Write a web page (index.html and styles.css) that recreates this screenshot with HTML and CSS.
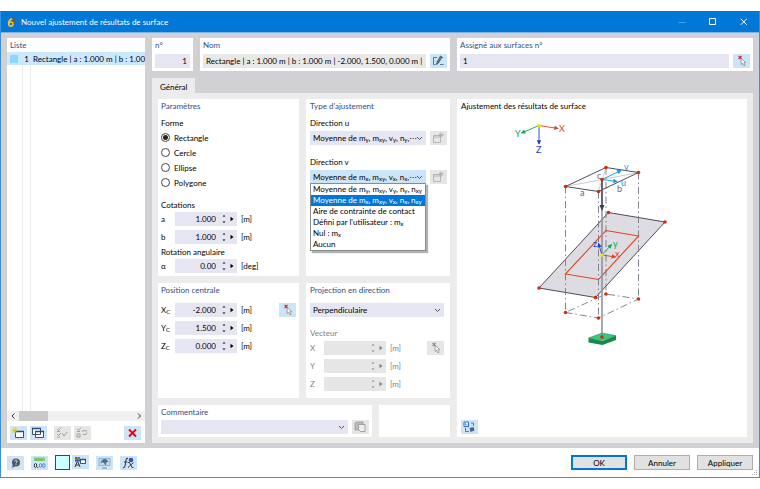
FILE: index.html
```html
<!DOCTYPE html>
<html lang="fr">
<head>
    <meta charset="UTF-8">
    <meta name="viewport" content="width=device-width, initial-scale=1.0">
    <title>Nouvel ajustement de résultats de surface</title>
    <link rel="stylesheet" href="styles.css">
</head>
<body>
    <svg class="defs" width="0" height="0" aria-hidden="true">
        <symbol id="i-steps" viewBox="0 0 8 14">
            <path d="M2.500 4.500l1.500-1.500 1.500 1.500zM2.500 9.500L4 11l1.500-1.500z" fill="currentColor"/>
        </symbol>
        <symbol id="i-play" viewBox="0 0 8 14">
            <path d="M2.500 4.700L5.500 7l-3 2.300z" fill="currentColor"/>
        </symbol>
        <symbol id="i-pick" viewBox="0 0 17 14">
            <path class="cross" d="M5.600 2l3 3M8.600 2l-3 3" stroke-width="1.100"/>
            <path d="M8 4.500l.2 6 1.400-1.300 1.300 2.600 1.200-.6-1.200-2.500 1.800-.3z" fill="#fff" stroke="#7b7f84" stroke-width=".7"/>
        </symbol>
        <symbol id="i-newtype" viewBox="0 0 17 14">
            <path d="M3.500 4.500h7v7h-7zM3.500 6h7M11 1.500v5M8.500 4h5.500M9.500 2.500l3.200 3M12.700 2.500l-3.200 3" fill="none" stroke="#a9a9a9" stroke-width=".8"/>
        </symbol>
    </svg>

    <div class="window">
        <header class="titlebar">
            <svg class="app-icon" viewBox="0 0 10 12">
                <path d="M4 3.500C5 1 9 1 9 4S8 8 7 8" fill="#596169" stroke="#596169"/>
                <path d="M4.800 2.500C2.500 3.800 1.600 6 1.600 8" fill="none" stroke="#f5c62c" stroke-width="1.600"/>
                <circle cx="3.800" cy="8" r="2.100" fill="none" stroke="#f5c62c" stroke-width="1.500"/>
            </svg>
            <h1>Nouvel ajustement de résultats de surface</h1>
            <button class="win-btn dim" aria-label="Réduire"><svg viewBox="0 0 8 8"><path d="M.5 4.500h7"/></svg></button>
            <button class="win-btn" aria-label="Agrandir"><svg viewBox="0 0 8 8"><path d="M.5.5h6v6h-6z"/></svg></button>
            <button class="win-btn" aria-label="Fermer"><svg viewBox="0 0 8 8"><path d="M.8.8l6 6M6.800.8l-6 6"/></svg></button>
        </header>

        <main class="main">
            <section class="panel list">
                <h2>Liste</h2>
                <div class="list-body">
                    <div class="list-row">
                        <span class="swatch"></span>
                        <span class="num">1</span>
                        <span class="name">Rectangle | a : 1.000 m | b : 1.000 m</span>
                    </div>
                </div>
                <div class="scrollbar">
                    <svg viewBox="0 0 10 10"><path d="M6.500 2.500L4 5l2.500 2.500"/></svg>
                    <span class="thumb"></span>
                    <svg viewBox="0 0 10 10"><path d="M4 2.500L6.500 5 4 7.500"/></svg>
                </div>
                <div class="list-tools">
                    <button class="tool" aria-label="Nouveau"><svg viewBox="0 0 17 14"><path d="M5.500 5.500h8v6h-8z" fill="#fff" stroke="#3d5064"/><path d="M5 5.500h9" stroke="#274b80" stroke-width="1.500"/><path d="M5 1v7M2 4.500h6M3 2.500l4 4M7 2.500l-4 4" stroke="#d8c21c" stroke-width=".9"/></svg></button>
                    <button class="tool" aria-label="Copier"><svg viewBox="0 0 17 14"><path d="M2.500 2.500h8v6h-8zM5.500 5.500h8v6h-8z" fill="#fff" stroke="#3d5064"/><path d="M2 2.500h9M5 5.500h9" stroke="#274b80" stroke-width="1.500"/></svg></button>
                    <button class="tool off gap" aria-label="Tout sélectionner" disabled><svg viewBox="0 0 17 14"><path d="M3 3l1.500 1.500L7 1.500M3 8l1.500 1.500L7 7M8.500 7.500l1.500 2.500 3-4M3 5.500h3M3 11h3" fill="none" stroke="#999" stroke-width=".9"/></svg></button>
                    <button class="tool off" aria-label="Inverser la sélection" disabled><svg viewBox="0 0 17 14"><path d="M3 3l1.500 1.500L7 1.500M3 5.500h3M3 8h3v3H3zM8 6l1-1.500 4 .5M9 8.500h3l1-2" fill="none" stroke="#999" stroke-width=".9"/></svg></button>
                    <button class="tool last" aria-label="Supprimer"><svg viewBox="0 0 17 14"><path d="M5 3.500l7 7M12 3.500l-7 7" stroke="#f00010" stroke-width="1.900"/></svg></button>
                </div>
            </section>

            <div class="right">
                <div class="top">
                    <section class="panel">
                        <h2><label for="no">n°</label></h2>
                        <input class="field end" id="no" type="text" value="1">
                    </section>
                    <section class="panel">
                        <h2><label for="nom">Nom</label></h2>
                        <div class="line">
                            <input class="field grey" id="nom" type="text" readonly value="Rectangle | a : 1.000 m | b : 1.000 m | -2.000, 1.500, 0.000 m | Moyenne">
                            <button class="tool" aria-label="Modifier le nom"><svg viewBox="0 0 17 14"><path d="M7 3.500H3.500v7h2M11 3.500h2M10 10.500h3.500" fill="none" stroke="#536b80" stroke-width=".9"/><path d="M6.500 10.500L7 8l3.500-6 1.500 1-3.500 6z" fill="#6d7e8c" stroke="#35434f" stroke-width=".7"/></svg></button>
                        </div>
                    </section>
                    <section class="panel">
                        <h2><label for="surf">Assigné aux surfaces n°</label></h2>
                        <div class="line">
                            <input class="field" id="surf" type="text" value="1">
                            <button class="tool" aria-label="Sélectionner les surfaces"><svg><use href="#i-pick"/></svg></button>
                        </div>
                    </section>
                </div>

                <div class="tabs" role="tablist">
                    <button class="tab" role="tab" aria-selected="true">Général</button>
                </div>

                <div class="tab-page">
                    <section class="panel params">
                        <h2>Paramètres</h2>
                        <fieldset class="shapes">
                            <legend>Forme</legend>
                            <label><input type="radio" name="forme" checked>Rectangle</label>
                            <label><input type="radio" name="forme">Cercle</label>
                            <label><input type="radio" name="forme">Ellipse</label>
                            <label><input type="radio" name="forme">Polygone</label>
                        </fieldset>
                        <h3 class="dims">Cotations</h3>
                        <div class="values">
                            <div class="value">
                                <label for="a">a</label>
                                <div class="spin"><input id="a" type="text" value="1.000"><button aria-label="Pas"><svg><use href="#i-steps"/></svg></button><button aria-label="Plus"><svg><use href="#i-play"/></svg></button></div>
                                <span>[m]</span>
                            </div>
                            <div class="value">
                                <label for="b">b</label>
                                <div class="spin"><input id="b" type="text" value="1.000"><button aria-label="Pas"><svg><use href="#i-steps"/></svg></button><button aria-label="Plus"><svg><use href="#i-play"/></svg></button></div>
                                <span>[m]</span>
                            </div>
                        </div>
                        <h3>Rotation angulaire</h3>
                        <div class="values">
                            <div class="value">
                                <label for="alpha">α</label>
                                <div class="spin"><input id="alpha" type="text" value="0.00"><button aria-label="Pas"><svg><use href="#i-steps"/></svg></button><button aria-label="Plus"><svg><use href="#i-play"/></svg></button></div>
                                <span>[deg]</span>
                            </div>
                        </div>
                    </section>

                    <section class="panel type">
                        <h2>Type d'ajustement</h2>
                        <label class="caption" for="dir-u">Direction u</label>
                        <div class="line combo">
                            <select class="field" id="dir-u">
                                <option aria-label="Moyenne, direction y"></option>
                            </select>
                            <span class="combo-text">Moyenne de m<sub>y</sub>, m<sub>xy</sub>, v<sub>y</sub>, n<sub>y</sub>,⋯</span>
                            <button class="tool off" aria-label="Nouveau type" disabled><svg><use href="#i-newtype"/></svg></button>
                        </div>
                        <label class="caption second" for="dir-v">Direction v</label>
                        <div class="line combo">
                            <select class="field active" id="dir-v">
                                <option aria-label="Moyenne, direction x"></option>
                            </select>
                            <span class="combo-text">Moyenne de m<sub>x</sub>, m<sub>xy</sub>, v<sub>x</sub>, n<sub>x</sub>,⋯</span>
                            <button class="tool off" aria-label="Nouveau type" disabled><svg><use href="#i-newtype"/></svg></button>
                            <ul class="popup" role="listbox">
                                <li role="option">Moyenne de m<sub>y</sub>, m<sub>xy</sub>, v<sub>y</sub>, n<sub>y</sub>, n<sub>xy</sub></li>
                                <li role="option" aria-selected="true">Moyenne de m<sub>x</sub>, m<sub>xy</sub>, v<sub>x</sub>, n<sub>x</sub>, n<sub>xy</sub></li>
                                <li role="option">Aire de contrainte de contact</li>
                                <li role="option">Défini par l'utilisateur : m<sub>x</sub></li>
                                <li role="option">Nul : m<sub>x</sub></li>
                                <li role="option">Aucun</li>
                            </ul>
                        </div>
                    </section>

                    <section class="panel position">
                        <h2>Position centrale</h2>
                        <div class="pick-row">
                            <div class="values">
                                <div class="value">
                                    <label for="xc">X<sub>C</sub></label>
                                    <div class="spin"><input id="xc" type="text" value="-2.000"><button aria-label="Pas"><svg><use href="#i-steps"/></svg></button><button aria-label="Plus"><svg><use href="#i-play"/></svg></button></div>
                                    <span>[m]</span>
                                </div>
                                <div class="value">
                                    <label for="yc">Y<sub>C</sub></label>
                                    <div class="spin"><input id="yc" type="text" value="1.500"><button aria-label="Pas"><svg><use href="#i-steps"/></svg></button><button aria-label="Plus"><svg><use href="#i-play"/></svg></button></div>
                                    <span>[m]</span>
                                </div>
                                <div class="value">
                                    <label for="zc">Z<sub>C</sub></label>
                                    <div class="spin"><input id="zc" type="text" value="0.000"><button aria-label="Pas"><svg><use href="#i-steps"/></svg></button><button aria-label="Plus"><svg><use href="#i-play"/></svg></button></div>
                                    <span>[m]</span>
                                </div>
                            </div>
                            <button class="tool" aria-label="Sélectionner le centre"><svg><use href="#i-pick"/></svg></button>
                        </div>
                    </section>

                    <section class="panel projection">
                        <h2><label for="proj">Projection en direction</label></h2>
                        <select class="field" id="proj">
                            <option>Perpendiculaire</option>
                        </select>
                        <h3>Vecteur</h3>
                        <div class="pick-row">
                            <div class="values">
                                <div class="value">
                                    <label for="vx">X</label>
                                    <div class="spin"><input id="vx" type="text" disabled><button aria-label="Pas" disabled><svg><use href="#i-steps"/></svg></button><button aria-label="Plus" disabled><svg><use href="#i-play"/></svg></button></div>
                                    <span>[m]</span>
                                </div>
                                <div class="value">
                                    <label for="vy">Y</label>
                                    <div class="spin"><input id="vy" type="text" disabled><button aria-label="Pas" disabled><svg><use href="#i-steps"/></svg></button><button aria-label="Plus" disabled><svg><use href="#i-play"/></svg></button></div>
                                    <span>[m]</span>
                                </div>
                                <div class="value">
                                    <label for="vz">Z</label>
                                    <div class="spin"><input id="vz" type="text" disabled><button aria-label="Pas" disabled><svg><use href="#i-steps"/></svg></button><button aria-label="Plus" disabled><svg><use href="#i-play"/></svg></button></div>
                                    <span>[m]</span>
                                </div>
                            </div>
                            <button class="tool off" aria-label="Sélectionner le vecteur" disabled><svg><use href="#i-pick"/></svg></button>
                        </div>
                    </section>

                    <div class="bottom">
                        <section class="panel comment">
                            <h2><label for="comment">Commentaire</label></h2>
                            <div class="line">
                                <select class="field" id="comment"><option></option></select>
                                <button class="tool off" aria-label="Bibliothèque" disabled><svg viewBox="0 0 17 14"><path d="M3 3l2-1h6v7l-2 1H3z" fill="#bdbdbd" stroke="#999" stroke-width=".8"/><path d="M6.500 4.500h6.500v7H8.500l-2-2z" fill="#eee" stroke="#999" stroke-width=".9"/></svg></button>
                            </div>
                        </section>
                        <section class="panel blank"></section>
                    </div>

                    <section class="panel preview">
                        <h3>Ajustement des résultats de surface</h3>
                        <svg class="drawing" viewBox="457 112 290 308" role="img" aria-label="Rectangle projeté sur une surface">
                            <defs>
                                <marker id="m-red" viewBox="0 0 6 6" refX="5" refY="3" markerWidth="6" markerHeight="5" orient="auto"><path d="M0 0l6 3-6 3z" fill="#d9431e"/></marker>
                                <marker id="m-green" viewBox="0 0 6 6" refX="5" refY="3" markerWidth="6" markerHeight="5" orient="auto"><path d="M0 0l6 3-6 3z" fill="#12a150"/></marker>
                                <marker id="m-blue" viewBox="0 0 6 6" refX="5" refY="3" markerWidth="6" markerHeight="5" orient="auto"><path d="M0 0l6 3-6 3z" fill="#1c3fc4"/></marker>
                                <marker id="m-cyan" viewBox="0 0 6 6" refX="5" refY="3" markerWidth="6" markerHeight="5" orient="auto"><path d="M0 0l6 3-6 3z" fill="#109ae0"/></marker>
                            </defs>

                            <!-- global axes -->
                            <g fill="none" stroke-width=".9">
                                <path d="M539 125.500L558 128.500" stroke="#d9431e" marker-end="url(#m-red)"/>
                                <path d="M539 125.500L521.500 133" stroke="#12a150" marker-end="url(#m-green)"/>
                                <path d="M539 125.500V144" stroke="#1c3fc4" marker-end="url(#m-blue)"/>
                            </g>
                            <circle cx="539" cy="125.500" r="1.800" fill="#ffdf00"/>
                            <text class="axis" x="559" y="132" fill="#d9431e">X</text>
                            <text class="axis" x="515" y="137" fill="#12a150">Y</text>
                            <text class="axis" x="536" y="153" fill="#1c3fc4">Z</text>

                            <!-- inclined surface -->
                            <path d="M608.500 212.500L665 222 595.500 297.500 539 288z" fill="#dcdce2" stroke="#4e4e5c"/>

                            <!-- projection lines -->
                            <g fill="none" stroke="#777785" stroke-width=".9" stroke-dasharray="7 3 1.500 3">
                                <path d="M565.500 186.500V312.500M598.500 191.500V318M606 167.500V294M638.500 172.500V299"/>
                                <path d="M565.500 312.500L598.500 318 638.500 299 606 294z"/>
                            </g>
                            <path d="M606 230.500L638.500 236 598.500 279.500 565.500 274z" fill="none" stroke="#db421c" stroke-width="1.100"/>

                            <!-- source rectangle -->
                            <path d="M565.500 186.500L638.500 172.500M598.500 191L606 167.500" stroke="#aaaab2" stroke-width=".6"/>
                            <path d="M565.500 186.500L606 167.500 638.500 172.500 598.500 191.500z" fill="none" stroke="#4e4e5c"/>
                            <path d="M602 336.500V179.500" stroke="#8c8c98" stroke-width="1.500"/>
                            <path d="M602 179.500V208" stroke="#4e4e5c" stroke-width="1.500"/>
                            <path d="M599.500 205h5l-2.500 6z" fill="#3f3f4d"/>
                            <g fill="none" stroke="#109ae0" stroke-width=".9">
                                <path d="M602 179.500L621 170.500" marker-end="url(#m-cyan)"/>
                                <path d="M602 179.500L617 181.500" marker-end="url(#m-cyan)"/>
                            </g>
                            <text class="axis" x="624" y="170" fill="#109ae0">v</text>
                            <text class="axis" x="621" y="186" fill="#109ae0">u</text>
                            <text class="axis" x="597" y="179" fill="#666674">c</text>
                            <text class="axis" x="580" y="196" fill="#666674">a</text>
                            <text class="axis" x="617" y="192" fill="#666674">b</text>

                            <!-- support -->
                            <path d="M588.500 338v4.500l14 2.500 13.500-5v-4.500l-13.500 5.500z" fill="#168a48"/>
                            <path d="M588.500 338l13.500-5 13.500 2.500-13.500 5z" fill="#3fc67c" stroke="#168a48" stroke-width=".5"/>

                            <!-- local axes -->
                            <g fill="none" stroke-width=".9">
                                <path d="M602 255L615.500 257" stroke="#d9431e" marker-end="url(#m-red)"/>
                                <path d="M602 255L611.500 244.500" stroke="#12a150" marker-end="url(#m-green)"/>
                                <path d="M602 255L598.500 243.500" stroke="#1c3fc4" marker-end="url(#m-blue)"/>
                            </g>
                            <circle cx="602" cy="255" r="1.800" fill="#ffdf00"/>
                            <text class="axis" x="615" y="257" fill="#d9431e">x</text>
                            <text class="axis" x="613" y="247" fill="#12a150">y</text>
                            <text class="axis" x="593" y="247" fill="#1c3fc4">z</text>

                            <g fill="#d52b08">
                                <circle cx="565.500" cy="186.500" r="1.800"/><circle cx="598.500" cy="191.500" r="1.800"/>
                                <circle cx="606" cy="167.500" r="1.800"/><circle cx="638.500" cy="172.500" r="1.800"/>
                                <circle cx="602" cy="179.500" r="1.800"/><circle cx="608.500" cy="212.500" r="1.800"/>
                                <circle cx="665" cy="222" r="1.800"/><circle cx="595.500" cy="297.500" r="1.800"/>
                                <circle cx="539" cy="288" r="1.800"/><circle cx="565.500" cy="312.500" r="1.800"/>
                                <circle cx="598.500" cy="318" r="1.800"/><circle cx="638.500" cy="299" r="1.800"/>
                                <circle cx="606" cy="294" r="1.800"/><circle cx="602" cy="337" r="1.800"/>
                            </g>
                        </svg>
                        <button class="tool" aria-label="Changer la vue"><svg viewBox="0 0 17 14"><path d="M3 2h4.500v4.500H3z" fill="#fff" stroke="#2d68d8"/><path d="M4.500 3v2h2" fill="none" stroke="#2d68d8" stroke-width=".7"/><path d="M8.500 8l4-1 1 3.500-4 1.500z" fill="#47658f"/><path d="M4.500 8v3.500H8M10 3h2.500v3" fill="none" stroke="#555" stroke-width=".8"/></svg></button>
                    </section>
                </div>
            </div>
        </main>

        <footer class="footer">
            <button class="tool" aria-label="Aide"><svg viewBox="0 0 17 14"><circle cx="9" cy="6.500" r="4" fill="#4c5660"/><path d="M4.500 12l2-4 2 2z" fill="#4c5660"/><path d="M7.700 5.500c0-2 2.800-1.500 2.500 0-.2 1-1.200.8-1.200 2M9 8.300v.9" fill="none" stroke="#fff" stroke-width=".9"/></svg></button>
            <button class="tool" aria-label="Unités"><svg viewBox="0 0 17 14"><path d="M3 1.500h11v3.500H3z" fill="#82cc70"/><path d="M5 3v2M7 3v2M9 3v2M11 3v2" stroke="#4f9a43" stroke-width=".5"/><ellipse cx="4.500" cy="9.500" rx="1.200" ry="2" fill="none" stroke="#334"/><path d="M6.800 11v1" stroke="#334"/><ellipse cx="9.500" cy="9.500" rx="1.200" ry="2" fill="none" stroke="#4e86ec"/><ellipse cx="12.800" cy="9.500" rx="1.200" ry="2" fill="none" stroke="#4e86ec"/></svg></button>
            <div class="pair">
                <button class="color" aria-label="Couleur"></button>
                <button class="tool" aria-label="Affichage"><svg viewBox="0 0 17 14"><path d="M3 2h2.500v2.500H3z" fill="#e03030"/><path d="M5.500 2H8v2.500H5.500z" fill="#33a23b"/><path d="M3 4.500h5v2H3z" fill="#2457c9"/><path d="M3 12l2-5h1l2 5M4 10h3" fill="none" stroke="#333"/><path d="M8.500 4.500h5v4h-5z" fill="#fff" stroke="#2c4f8f"/><path d="M8 4.500h6" stroke="#2c4f8f" stroke-width="1.500"/></svg></button>
            </div>
            <button class="tool" aria-label="Vue"><svg viewBox="0 0 17 14"><path d="M3 2.500h11v7H3z" fill="#c3daea" stroke="#8ca6b8" stroke-width=".8"/><path d="M5 6.500c1.500-4 5-4 7-1l-2 .5-.5 3C8.500 6.500 7 5.500 5 6.500zM6 12h5" fill="#416f98" stroke="#416f98" stroke-width=".7"/></svg></button>
            <button class="tool" aria-label="Formules"><svg viewBox="0 0 17 14"><path d="M8 2.500c-2-.5-2 1-2.300 3.500S5 12.500 3 11.500M4 6h3.500" fill="none" stroke="#34404c" stroke-width="1.100"/><path d="M8 6.500h1.500l2.500 5h1.500M13.500 6.500L8 11.500" fill="none" stroke="#34404c"/><circle cx="11" cy="4" r="2.300" fill="#3c4faa"/></svg></button>
            <div class="actions">
                <button class="action default">OK</button>
                <button class="action">Annuler</button>
                <button class="action">Appliquer</button>
            </div>
            <svg class="grip" viewBox="0 0 6 6"><path d="M4 0h1v1H4zM2 2h1v1H2zM4 2h1v1H4zM0 4h1v1H0zM2 4h1v1H2zM4 4h1v1H4z" fill="#aaa"/></svg>
        </footer>
    </div>
</body>
</html>
```
FILE: styles.css
```css
* {
    margin: 0;
    padding: 0;
    box-sizing: border-box;
}

body {
    --cross: #e3202c;
    font-family: Lato, "Noto Sans", sans-serif;
    font-size: 8px;
    line-height: 12px;
    color: #000;
    background: #fff;
    min-height: 100vh;
    padding: 11px 0;
    display: flex;
    flex-direction: column;
}

button,
input,
select {
    font: inherit;
    color: inherit;
    border: 0;
    border-radius: 0;
    min-width: 0;
}

h1,
h2,
h3 {
    font-size: 8px;
    font-weight: 400;
}

sub {
    font-size: 6px;
    line-height: 0;
    vertical-align: -1px;
}

.defs {
    position: absolute;
}

.window {
    flex: 1;
    display: flex;
    flex-direction: column;
    border: 1px solid #3b92dc;
    border-top: 0;
}

/* title bar */
.titlebar {
    height: 22px;
    display: flex;
    align-items: center;
    background: #0078d7;
    border-bottom: 1px solid #7fb4e0;
    color: #fff;
    padding-left: 6px;
}

.app-icon {
    width: 10px;
    height: 12px;
    margin-right: 4px;
}

.titlebar h1 {
    flex: 1;
}

.win-btn {
    width: 31px;
    height: 20px;
    display: flex;
    align-items: center;
    justify-content: center;
    background: none;
}

.win-btn svg {
    width: 8px;
    height: 8px;
    fill: none;
    stroke: #fff;
}

.win-btn.dim {
    opacity: 0.3;
}

/* layout */
.main {
    flex: 1;
    display: flex;
    gap: 7px;
    padding: 5px 6px;
    background: #d0d0d5;
}

.right {
    flex: 1;
    min-width: 0;
    display: flex;
    flex-direction: column;
}

.panel {
    background: #fff;
    padding: 1px 3px 3px;
    min-width: 0;
}

.panel h2 {
    color: #354d82;
}

.line {
    display: flex;
    gap: 4px;
}

.field {
    flex: 1;
    width: 100%;
    height: 14px;
    padding: 0 3px;
    background: #e6e6f2;
    outline: none;
}

.field.end {
    text-align: right;
}

.field.grey {
    background: #e8e8e8;
}

select.field {
    appearance: none;
    padding: 0 11px 0 3px;
    background: #e6e6f2 url("data:image/svg+xml,%3Csvg xmlns='http://www.w3.org/2000/svg' width='7' height='5'%3E%3Cpath d='M1 1l2.500 2.500L6 1' fill='none' stroke='%23555'/%3E%3C/svg%3E") no-repeat right 3px center;
}

select.field.active {
    background-color: #cce4f7;
}

.tool {
    flex: none;
    width: 17px;
    height: 14px;
    background: #cce4f7;
}

.tool svg {
    display: block;
    width: 17px;
    height: 14px;
}

.tool.off {
    --cross: #888;
    background: #e6e6e6;
}

.cross {
    stroke: var(--cross);
}

/* list */
.list {
    width: 138px;
    padding: 1px 0 3px;
    display: flex;
    flex-direction: column;
}

.list h2 {
    padding-left: 3px;
}

.list-body {
    flex: 1;
    margin-top: 1px;
    background: linear-gradient(#ececec, #ececec) 15px 0 / 1px 100% no-repeat, linear-gradient(#ececec, #ececec) 23px 0 / 1px 100% no-repeat;
}

.list-row {
    display: flex;
    align-items: center;
    height: 13px;
    padding-left: 3px;
    background: #cce8ff;
    white-space: nowrap;
    overflow: hidden;
}

.swatch {
    flex: none;
    width: 8px;
    height: 8px;
    background: #8dd7f7;
}

.list-row .num {
    flex: none;
    width: 11px;
    text-align: right;
    margin-right: 4px;
}

.scrollbar {
    display: flex;
    height: 10px;
    background: #f0f0f0;
}

.scrollbar svg {
    width: 10px;
    height: 10px;
    margin: 0 1px;
    fill: none;
    stroke: #333;
}

.scrollbar .thumb {
    width: 29px;
    margin-right: auto;
    background: #c9c9c9;
}

.list-tools {
    display: flex;
    gap: 3px;
    padding: 5px 4px 0 3px;
}

.tool.gap {
    margin-left: 4px;
}

.tool.last {
    margin-left: auto;
}

/* header fields */
.top {
    display: grid;
    grid-template-columns: 41px 250px 1fr;
    gap: 7px;
    margin-bottom: 7px;
}

.top h2 {
    margin-bottom: 3px;
}

.tabs {
    display: flex;
}

.tab {
    height: 15px;
    padding: 2px 8px 0;
    background: #ececec;
}

.tab-page {
    flex: 1;
    display: grid;
    grid-template-columns: 141px 144px 1fr;
    grid-template-rows: auto 1fr auto;
    gap: 7px;
    padding: 6px;
    background: #ececec;
}

/* parameters */
.shapes {
    border: 0;
    margin-top: 5px;
}

.shapes legend {
    margin-bottom: 1px;
}

.shapes label {
    display: flex;
    align-items: center;
    gap: 4px;
    height: 15px;
}

.shapes input {
    appearance: none;
    width: 9px;
    height: 9px;
    border: 1px solid #444;
    border-radius: 50%;
}

.shapes input:checked {
    background: radial-gradient(#222 2px, #fff 3px);
}

.dims {
    margin-top: 9px;
}

.values {
    display: flex;
    flex-direction: column;
    gap: 4px;
}

.params h3 + .values {
    margin-top: 1px;
}

.params .values + h3 {
    margin-top: 2px;
}

.value {
    display: flex;
    gap: 4px;
    line-height: 14px;
}

.value label {
    width: 10px;
}

.spin {
    display: flex;
    width: 62px;
    height: 14px;
    background: #e6e6f2;
}

.spin input {
    flex: 1;
    background: none;
    text-align: right;
    padding-right: 4px;
}

.spin button {
    width: 8px;
    background: none;
}

.spin button + button {
    margin-right: 1px;
}

.spin svg {
    display: block;
    width: 8px;
    height: 14px;
}

/* adjustment type */
.caption {
    display: block;
    margin: 5px 0 2px;
}

.caption.second {
    margin-top: 11px;
}

.combo {
    position: relative;
}

.combo-text {
    position: absolute;
    top: 0;
    left: 3px;
    line-height: 14px;
    white-space: nowrap;
    pointer-events: none;
}

.popup {
    position: absolute;
    top: 13px;
    left: 0;
    right: 21px;
    z-index: 1;
    list-style: none;
    background: #fff;
    border: 1px solid #8a8a8a;
    box-shadow: 2px 2px 1px rgba(0, 0, 0, 0.3);
    white-space: nowrap;
}

.popup li {
    padding-left: 2px;
    line-height: 11px;
}

.popup li[aria-selected="true"] {
    background: #0078d7;
    color: #fff;
}

/* position and projection */
.position h2,
.projection h2 {
    margin-bottom: 7px;
}

.pick-row {
    display: flex;
    align-items: flex-start;
    justify-content: space-between;
}

.type,
.projection {
    padding-left: 4px;
}

.projection {
    padding-right: 6px;
}

.projection h3 {
    margin: 10px 0 2px;
}

.projection h3,
.projection .value {
    color: #808080;
}

.projection .spin {
    background: #e6e6e6;
}

.bottom {
    grid-column: 1 / 3;
    display: flex;
    gap: 7px;
}

.comment {
    flex: 1;
}

.comment h2 {
    margin-bottom: 2px;
}

.blank {
    flex: none;
    width: 71px;
}

/* preview */
.preview {
    grid-column: 3;
    grid-row: 1 / 4;
    display: flex;
    flex-direction: column;
    padding-left: 4px;
}

.drawing {
    flex: 1;
    min-height: 0;
    margin: 0 -3px 0 -4px;
}

.axis {
    font-size: 9px;
}

/* footer */
.footer {
    position: relative;
    display: flex;
    align-items: center;
    gap: 7px;
    height: 29px;
    padding: 0 6px;
}

.pair {
    display: flex;
    gap: 2px;
}

.color {
    width: 15px;
    height: 15px;
    background: #ccffff;
    border: 1px solid #444;
}

.actions {
    display: flex;
    gap: 7px;
    margin-left: auto;
}

.action {
    width: 56px;
    height: 15px;
    background: #e1e1e1;
    border: 1px solid #adadad;
}

.action.default {
    border: 2px solid #0078d7;
}

.grip {
    position: absolute;
    right: 1px;
    bottom: 1px;
    width: 6px;
    height: 6px;
}
```
